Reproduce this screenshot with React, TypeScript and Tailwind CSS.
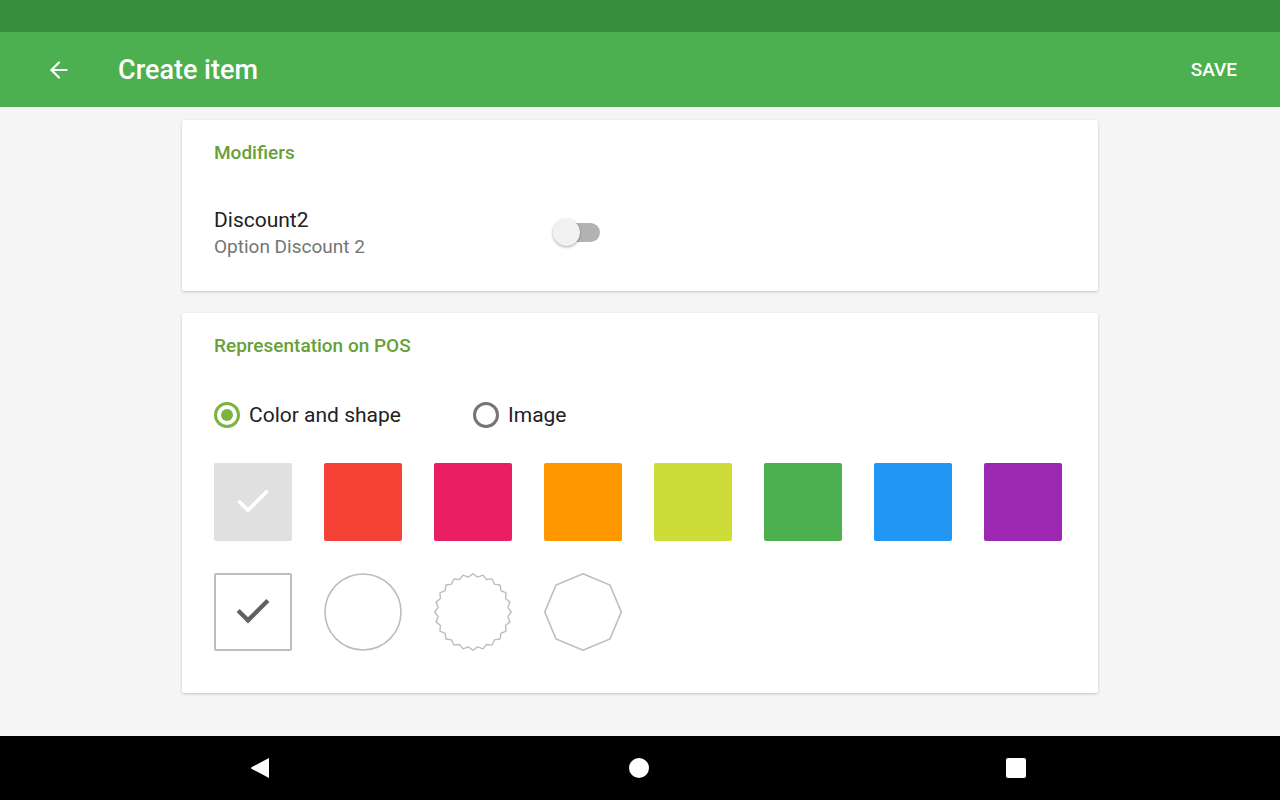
import { ArrowLeft, Check } from "lucide-react";

const swatches = [
  "#E0E0E0",
  "#F44336",
  "#E91E63",
  "#FF9800",
  "#CDDC39",
  "#4CAF50",
  "#2196F3",
  "#9C27B0",
];

function burstPath(cx: number, cy: number, rOut: number, rIn: number, n: number) {
  const pts: string[] = [];
  const steps = n * 2;
  for (let i = 0; i < steps; i++) {
    const a = (Math.PI * 2 * i) / steps - Math.PI / 2;
    const r = i % 2 === 0 ? rOut : rIn;
    pts.push(`${(cx + r * Math.cos(a)).toFixed(2)},${(cy + r * Math.sin(a)).toFixed(2)}`);
  }
  return pts.join(" ");
}

function octagon(cx: number, cy: number, r: number) {
  const pts: string[] = [];
  for (let i = 0; i < 8; i++) {
    const a = (Math.PI * 2 * i) / 8 - Math.PI / 2;
    pts.push(`${(cx + r * Math.cos(a)).toFixed(2)},${(cy + r * Math.sin(a)).toFixed(2)}`);
  }
  return pts.join(" ");
}

function Card({ title, children, className }: { title: string; children: React.ReactNode; className?: string }) {
  return (
    <section
      className={`rounded-[2px] bg-white px-8 pt-[22px] shadow-[0_1px_3px_rgba(0,0,0,0.2)] ${className ?? ""}`}
    >
      <h2 className="text-[19px] font-medium leading-[22px] text-[#689F38]">{title}</h2>
      {children}
    </section>
  );
}

export default function App() {
  return (
    <div
      className="flex h-[800px] w-[1280px] flex-col bg-[#F5F5F5]"
      style={{ fontFamily: "Roboto, 'Noto Sans', sans-serif" }}
    >
      <div className="h-8 bg-[#388E3C]" />

      <header className="flex h-[75px] items-center bg-[#4CAF50] text-white">
        <ArrowLeft className="ml-[46px] h-[26px] w-[26px]" strokeWidth={2} />
        <h1 className="ml-[46px] mt-[2px] text-[27px] font-medium">Create item</h1>
        <button className="ml-auto mr-[43px] mt-[2px] text-[19px] font-medium">SAVE</button>
      </header>

      <main className="flex flex-1 flex-col items-center gap-[22px] pt-[13px]">
        <Card title="Modifiers" className="w-[916px] pb-[30px]">
          <div className="mt-[43px] flex items-center">
            <div className="w-[339px]">
              <div className="text-[21px] leading-[26px] text-[#212121]">Discount2</div>
              <div className="text-[19px] leading-[28px] text-[#757575]">Option Discount 2</div>
            </div>
            <div className="relative -mt-[4px] h-[27px] w-[47px]">
              <div className="absolute left-[6px] top-[4px] h-[19px] w-[41px] rounded-full bg-[#B3B3B3]" />
              <div className="absolute left-0 top-0 h-[27px] w-[27px] rounded-full bg-[#F1F1F1] shadow-[0_1px_3px_rgba(0,0,0,0.35)]" />
            </div>
          </div>
        </Card>

        <Card title="Representation on POS" className="w-[916px] pb-[42px]">
          <div className="mt-[45px] flex items-center">
            <label className="flex w-[259px] items-center gap-[9px]">
              <span className="flex h-[26px] w-[26px] items-center justify-center rounded-full border-[3px] border-[#7CB342]">
                <span className="h-[12px] w-[12px] rounded-full bg-[#7CB342]" />
              </span>
              <span className="text-[21px] leading-[26px] text-[#212121]">Color and shape</span>
            </label>
            <label className="flex items-center gap-[9px]">
              <span className="h-[26px] w-[26px] rounded-full border-[3px] border-[#757575]" />
              <span className="text-[21px] leading-[26px] text-[#212121]">Image</span>
            </label>
          </div>

          <div className="mt-[35px] flex gap-8">
            {swatches.map((c, i) => (
              <div
                key={c}
                className="flex h-[78px] w-[78px] items-center justify-center rounded-[2px]"
                style={{ backgroundColor: c }}
              >
                {i === 0 && <Check className="h-[40px] w-[40px] text-white" strokeWidth={2.2} strokeLinecap="square" strokeLinejoin="miter" />}
              </div>
            ))}
          </div>

          <div className="mt-8 flex gap-8">
            <div className="flex h-[78px] w-[78px] items-center justify-center rounded-[2px] border-2 border-[#BDBDBD]">
              <Check className="h-[40px] w-[40px] text-[#616161]" strokeWidth={2.6} strokeLinecap="square" strokeLinejoin="miter" />
            </div>
            <svg width="78" height="78" viewBox="0 0 78 78">
              <circle cx="39" cy="39" r="38" fill="none" stroke="#BDBDBD" strokeWidth="1.6" />
            </svg>
            <svg width="78" height="78" viewBox="0 0 78 78">
              <polygon
                points={burstPath(39, 39, 38.2, 35.2, 24)}
                fill="none"
                stroke="#BDBDBD"
                strokeWidth="1.4"
                strokeLinejoin="round"
              />
            </svg>
            <svg width="78" height="78" viewBox="0 0 78 78">
              <polygon points={octagon(39, 39, 38.2)} fill="none" stroke="#BDBDBD" strokeWidth="1.6" />
            </svg>
          </div>
        </Card>
      </main>

      <nav className="flex h-16 items-center bg-black">
        <svg className="absolute left-[250px]" width="20" height="22" viewBox="0 0 20 22">
          <path d="M19 1 L19 21 L1.5 11.8 Q0.5 11 1.5 10.2 Z" fill="white" />
        </svg>
        <div className="absolute left-[629px] h-[20px] w-[20px] rounded-full bg-white" />
        <div className="absolute left-[1006px] h-[20px] w-[20px] rounded-[2px] bg-white" />
      </nav>
    </div>
  );
}
